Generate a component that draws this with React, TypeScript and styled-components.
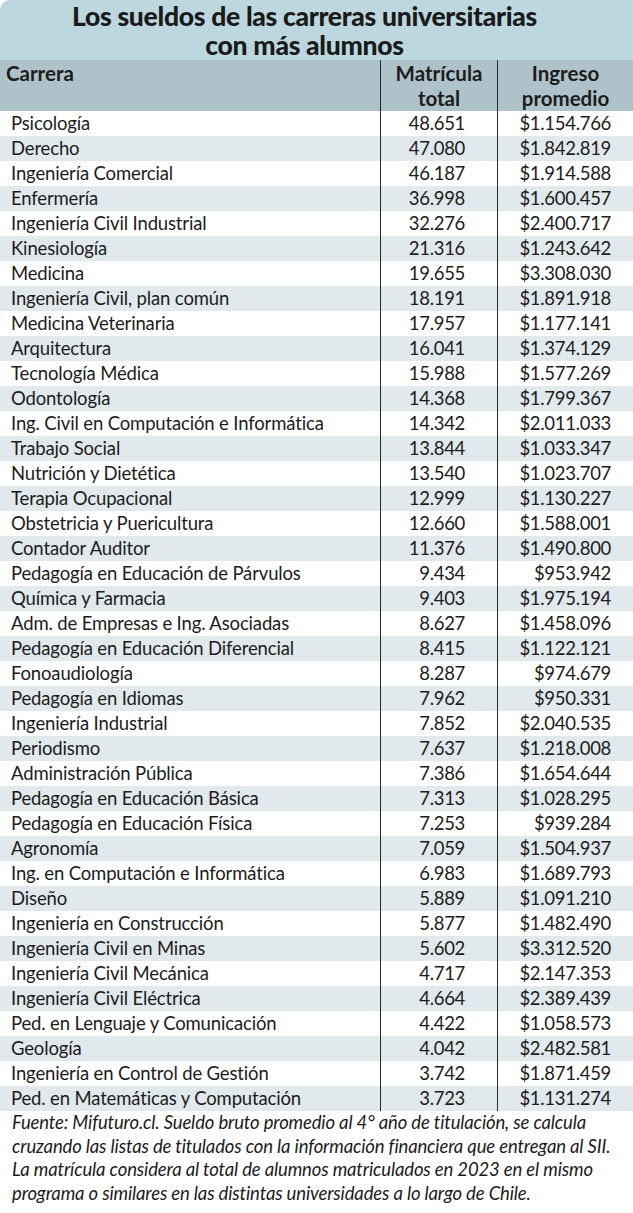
import React from 'react';
import styled, { createGlobalStyle } from 'styled-components';

const GlobalStyle = createGlobalStyle`
  html, body {
    margin: 0;
    padding: 0;
    background: #ffffff;
  }
  body {
    font-family: Lato, 'Open Sans', sans-serif;
    color: #1c1c1c;
  }
`;

type Row = [string, string, string];

const rows: Row[] = [
  ['Psicología', '48.651', '$1.154.766'],
  ['Derecho', '47.080', '$1.842.819'],
  ['Ingeniería Comercial', '46.187', '$1.914.588'],
  ['Enfermería', '36.998', '$1.600.457'],
  ['Ingeniería Civil Industrial', '32.276', '$2.400.717'],
  ['Kinesiología', '21.316', '$1.243.642'],
  ['Medicina', '19.655', '$3.308.030'],
  ['Ingeniería Civil, plan común', '18.191', '$1.891.918'],
  ['Medicina Veterinaria', '17.957', '$1.177.141'],
  ['Arquitectura', '16.041', '$1.374.129'],
  ['Tecnología Médica', '15.988', '$1.577.269'],
  ['Odontología', '14.368', '$1.799.367'],
  ['Ing. Civil en Computación e Informática', '14.342', '$2.011.033'],
  ['Trabajo Social', '13.844', '$1.033.347'],
  ['Nutrición y Dietética', '13.540', '$1.023.707'],
  ['Terapia Ocupacional', '12.999', '$1.130.227'],
  ['Obstetricia y Puericultura', '12.660', '$1.588.001'],
  ['Contador Auditor', '11.376', '$1.490.800'],
  ['Pedagogía en Educación de Párvulos', '9.434', '$953.942'],
  ['Química y Farmacia', '9.403', '$1.975.194'],
  ['Adm. de Empresas e Ing. Asociadas', '8.627', '$1.458.096'],
  ['Pedagogía en Educación Diferencial', '8.415', '$1.122.121'],
  ['Fonoaudiología', '8.287', '$974.679'],
  ['Pedagogía en Idiomas', '7.962', '$950.331'],
  ['Ingeniería Industrial', '7.852', '$2.040.535'],
  ['Periodismo', '7.637', '$1.218.008'],
  ['Administración Pública', '7.386', '$1.654.644'],
  ['Pedagogía en Educación Básica', '7.313', '$1.028.295'],
  ['Pedagogía en Educación Física', '7.253', '$939.284'],
  ['Agronomía', '7.059', '$1.504.937'],
  ['Ing. en Computación e Informática', '6.983', '$1.689.793'],
  ['Diseño', '5.889', '$1.091.210'],
  ['Ingeniería en Construcción', '5.877', '$1.482.490'],
  ['Ingeniería Civil en Minas', '5.602', '$3.312.520'],
  ['Ingeniería Civil Mecánica', '4.717', '$2.147.353'],
  ['Ingeniería Civil Eléctrica', '4.664', '$2.389.439'],
  ['Ped. en Lenguaje y Comunicación', '4.422', '$1.058.573'],
  ['Geología', '4.042', '$2.482.581'],
  ['Ingeniería en Control de Gestión', '3.742', '$1.871.459'],
  ['Ped. en Matemáticas y Computación', '3.723', '$1.131.274'],
];

const notes = [
  'Fuente: Mifuturo.cl. Sueldo bruto promedio al 4° año de titulación, se calcula',
  'cruzando las listas de titulados con la información financiera que entregan al SII.',
  'La matrícula considera al total de alumnos matriculados en 2023 en el mismo',
  'programa o similares en las distintas universidades a lo largo de Chile.',
];

const Page = styled.div`
  width: 633px;
`;

const Title = styled.h1`
  margin: 0;
  height: 60px;
  background: #bdd7df;
  border-top-left-radius: 10px;
  font-size: 26.5px;
  font-weight: 900;
  line-height: 29px;
  text-align: center;
  padding: 2px 24px 0 0;
  box-sizing: border-box;
  color: #1a1a1a;
  letter-spacing: -0.3px;
  white-space: nowrap;
`;

const Grid = styled.div`
  display: grid;
  grid-template-columns: 380px 117px 136px;
`;

const HeadCell = styled.div<{ $align: 'left' | 'center' }>`
  background: #aec2ca;
  height: 51px;
  font-size: 20.5px;
  font-weight: 700;
  line-height: 25px;
  text-align: ${p => p.$align};
  padding: ${p => (p.$align === 'left' ? '1px 0 0 6px' : '1px 0 0 0')};
  box-sizing: border-box;
  border-left: ${p => (p.$align === 'left' ? 'none' : '1px solid #2a2a2a')};
`;

const Cell = styled.div<{ $striped: boolean; $pad: number; $divider: boolean }>`
  background: ${p => (p.$striped ? '#e1e9ec' : '#ffffff')};
  height: 25px;
  font-size: 18.5px;
  line-height: 25px;
  white-space: nowrap;
  text-align: ${p => (p.$divider ? 'right' : 'left')};
  padding: ${p => (p.$divider ? `0 ${p.$pad}px 0 0` : `0 0 0 ${p.$pad}px`)};
  border-left: ${p => (p.$divider ? '1px solid #2a2a2a' : 'none')};
  box-sizing: border-box;
  letter-spacing: ${p => (p.$divider ? '-0.3px' : '-0.15px')};
`;

const Footer = styled.div`
  padding: 0 0 0 12px;
`;

const Note = styled.p`
  margin: 0;
  font-size: 18.5px;
  font-style: italic;
  line-height: 23.7px;
  letter-spacing: -0.15px;
  white-space: nowrap;
  color: #1c1c1c;
`;

const App = () => (
  <Page>
    <GlobalStyle />
    <Title>
      Los sueldos de las carreras universitarias
      <br />
      con más alumnos
    </Title>
    <Grid>
      <HeadCell $align='left'>Carrera</HeadCell>
      <HeadCell $align='center'>
        Matrícula
        <br />
        total
      </HeadCell>
      <HeadCell $align='center'>
        Ingreso
        <br />
        promedio
      </HeadCell>
      {rows.map(([name, total, pay], i) => (
        <React.Fragment key={name}>
          <Cell $striped={i % 2 === 1} $pad={11} $divider={false}>
            {name}
          </Cell>
          <Cell $striped={i % 2 === 1} $pad={32} $divider>
            {total}
          </Cell>
          <Cell $striped={i % 2 === 1} $pad={22} $divider>
            {pay}
          </Cell>
        </React.Fragment>
      ))}
    </Grid>
    <Footer>
      {notes.map(line => (
        <Note key={line}>{line}</Note>
      ))}
    </Footer>
  </Page>
);

export default App;
